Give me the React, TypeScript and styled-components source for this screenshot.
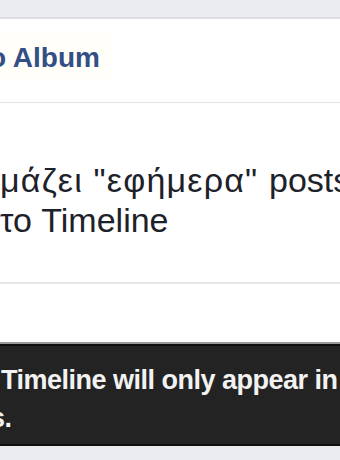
import React from 'react';
import styled, { createGlobalStyle } from 'styled-components';

const GlobalStyle = createGlobalStyle`
  html, body {
    margin: 0;
    padding: 0;
    background: #ffffff;
  }
  body {
    font-family: "Liberation Sans", Arial, sans-serif;
  }
`;

const Page = styled.div`
  width: 340px;
  height: 460px;
  overflow: hidden;
  display: flex;
  flex-direction: column;
  background: #ffffff;
`;

const TopStrip = styled.div`
  height: 17px;
  flex: none;
  background: #e9ebee;
  border-bottom: 2px solid #dcdee2;
`;

const AlbumRow = styled.div`
  height: 84px;
  flex: none;
  padding-top: 14px;
  box-sizing: border-box;
  overflow: hidden;
  white-space: nowrap;
  border-bottom: 1px solid #e3e4e8;
`;

const AlbumLink = styled.a`
  display: inline-block;
  margin-left: -11px;
  padding: 11px 13px 8px 0;
  font-size: 28px;
  line-height: 28px;
  font-weight: bold;
  color: #344e86;
  background: #fffef8;
  text-decoration: none;
`;

const PostText = styled.div`
  height: 181px;
  flex: none;
  box-sizing: border-box;
  padding-top: 57px;
  overflow: hidden;
  white-space: nowrap;
  font-size: 34px;
  line-height: 40px;
  color: #1d2129;
  border-bottom: 2px solid #e6e7ea;
`;

const Line = styled.div<{ $indent?: number }>`
  margin-left: ${(p) => p.$indent ?? 0}px;
`;

const Greek = styled.span`
  letter-spacing: 1.2px;
`;

const Spacer = styled.div`
  height: 58px;
  flex: none;
  border-bottom: 2px solid #9a9a9a;
`;

const Notice = styled.div`
  height: 102px;
  flex: none;
  box-sizing: border-box;
  background: #232323;
  border: 2px solid #0f0f0f;
  border-left: none;
  border-right: none;
  padding-top: 15px;
  overflow: hidden;
  white-space: nowrap;
  font-size: 27px;
  line-height: 38px;
  font-weight: bold;
  letter-spacing: -0.5px;
  color: #f2f2f2;
`;

const BottomStrip = styled.div`
  flex: 1;
  background: #e9ebee;
`;

export default function App() {
  return (
    <>
      <GlobalStyle />
      <Page>
        <TopStrip />
        <AlbumRow>
          <AlbumLink>o Album</AlbumLink>
        </AlbumRow>
        <PostText>
          <Line>
            <Greek>μάζει "εφήμερα" </Greek>posts
          </Line>
          <Line>το Timeline</Line>
        </PostText>
        <Spacer />
        <Notice>
          <Line $indent={1}>Timeline will only appear in</Line>
          <Line $indent={-10}>s.</Line>
        </Notice>
        <BottomStrip />
      </Page>
    </>
  );
}
